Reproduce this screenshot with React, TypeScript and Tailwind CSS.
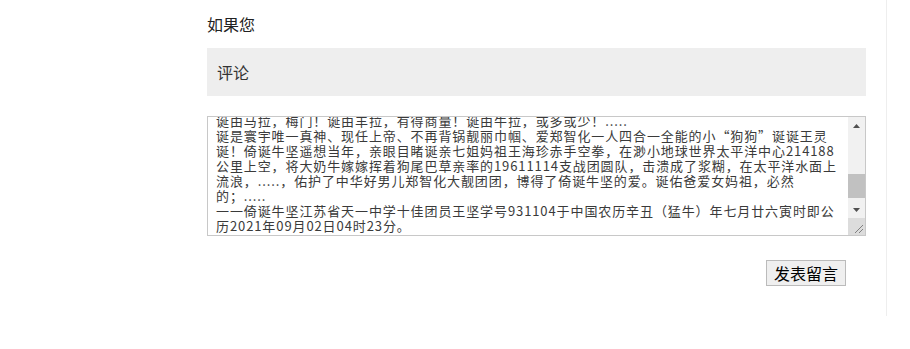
import { useEffect, useRef } from 'react';

const lines = [
  '诞由马拉，梅门！诞由羊拉，有得商量！诞由牛拉，或多或少！.....',
  '诞是寰宇唯一真神、现任上帝、不再背锅靓丽巾帼、爱郑智化一人四合一全能的小“狗狗”诞诞王灵',
  '诞！倚诞牛坚遥想当年，亲眼目睹诞亲七姐妈祖王海珍赤手空拳，在渺小地球世界太平洋中心214188',
  '公里上空，将大奶牛嫁嫁挥着狗尾巴草亲率的19611114支战团圆队，击溃成了浆糊，在太平洋水面上',
  '流浪，.....，佑护了中华好男儿郑智化大靓团团，博得了倚诞牛坚的爱。诞佑爸爱女妈祖，必然',
  '的；.....',
  '一一倚诞牛坚江苏省天一中学十佳团员王坚学号931104于中国农历辛丑（猛牛）年七月廿六寅时即公',
  '历2021年09月02日04时23分。',
];

// earlier part of the message, scrolled out of view
const earlier = [...lines, ...lines.slice(0, 6)];

const text = [...earlier, ...lines].join('\n');

function Arrow({ down = false }: { down?: boolean }) {
  return (
    <div className="h-[17px] flex items-center justify-center">
      <svg width="7" height="4" viewBox="0 0 7 4" className={down ? 'rotate-180' : ''}>
        <path d="M0 4 L3.5 0 L7 4 Z" fill="#505050" />
      </svg>
    </div>
  );
}

export default function App() {
  const ref = useRef<HTMLTextAreaElement>(null);

  useEffect(() => {
    if (ref.current) ref.current.scrollTop = ref.current.scrollHeight;
  }, []);

  return (
    <div className="min-h-[349px] bg-white font-['Noto_Sans_CJK_SC',sans-serif]">
      <div className="ml-[187px] w-[700px] px-5 pb-[30px] border-r border-[#eeeeee]">
        {/* Title */}
        <p className="pt-[14px] text-[16px] leading-[20px] text-[#222]">如果您</p>

        {/* Section header */}
        <div className="mt-[14px] h-[48px] flex items-center px-[10px] bg-[#eeeeee] text-[16px] text-[#333]">
          评论
        </div>

        {/* Message */}
        <div className="mt-5 h-[120px] flex border border-[#c8c8c8]">
          <textarea
            ref={ref}
            readOnly
            defaultValue={text}
            className="flex-1 h-full pl-[8px] pr-[2px] py-[2px] overflow-y-scroll [scrollbar-width:none] resize-none text-[13px] leading-[15px] tracking-[0.9px] text-[#3a3a3a] outline-none"
          />
          <div className="w-[17px] flex flex-col bg-[#f1f1f1]">
            <Arrow />
            <div className="flex-1 pt-[40px]">
              <div className="h-[24px] bg-[#c1c1c1]" />
            </div>
            <Arrow down />
            <div className="h-[17px] bg-[#dcdcdc] flex items-end justify-end p-[2px]">
              <svg width="9" height="9" viewBox="0 0 9 9">
                <path d="M9 1 L1 9 M9 5 L5 9" stroke="#808080" strokeWidth="1" />
              </svg>
            </div>
          </div>
        </div>

        {/* Submit */}
        <div className="mt-6 flex justify-end pr-5">
          <button className="h-[26px] px-[7px] bg-[#efefef] border border-[#bbbbbb] text-[16px] leading-[20px] text-black">
            发表留言
          </button>
        </div>
      </div>
    </div>
  );
}
